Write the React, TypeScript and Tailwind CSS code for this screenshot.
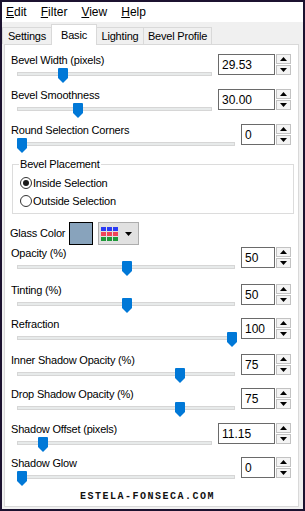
import type { ReactNode } from 'react';

const font = { fontFamily: '"Liberation Sans", Arial, sans-serif' };

function Thumb() {
  return (
    <svg width="10" height="15" viewBox="0 0 10 15" className="block">
      <path d="M1 0 H9 Q10 0 10 1 V10 L5 15 L0 10 V1 Q0 0 1 0 Z" fill="#0078d7" />
    </svg>
  );
}

function Arrow({ up }: { up?: boolean }) {
  return (
    <svg width="7" height="4" viewBox="0 0 7 4" className="block">
      <path d={up ? 'M3.5 0 L7 4 H0 Z' : 'M0 0 H7 L3.5 4 Z'} fill="#000" />
    </svg>
  );
}

function Spin({ value, wide }: { value: string; wide?: boolean }) {
  return (
    <div className="flex h-[21px] gap-[1px]">
      <div
        className={`flex h-full items-center border border-[#6a6a6a] bg-white pl-[3px] text-[12px] text-black ${wide ? 'w-[57px]' : 'w-[34px]'}`}
      >
        {value}
      </div>
      <div className="flex h-full w-[15px] flex-col gap-[1px]">
        <div className="flex flex-1 items-center justify-center border border-[#c2c2c2] bg-[#f4f4f4]">
          <Arrow up />
        </div>
        <div className="flex flex-1 items-center justify-center border border-[#c2c2c2] bg-[#f4f4f4]">
          <Arrow />
        </div>
      </div>
    </div>
  );
}

type RowProps = {
  label: string;
  value: string;
  offset: number;
  wide?: boolean;
  height: string;
};

function SliderRow({ label, value, offset, wide, height }: RowProps) {
  return (
    <div className={`flex ${height}`}>
      <div className="pl-[6px]">
        <div className="text-[11px] leading-[16px] tracking-[-0.2px] text-black">{label}</div>
        <div
          className={`relative ml-[6px] mt-[4px] h-[4px] border border-[#d6d6d6] bg-[#e7eaea] ${wide ? 'w-[195px]' : 'w-[218px]'}`}
        >
          <div className="absolute top-[-5px]" style={{ left: offset - 1 }}>
            <Thumb />
          </div>
        </div>
      </div>
      <div className="ml-auto mr-[7px] mt-[2px]">
        <Spin value={value} wide={wide} />
      </div>
    </div>
  );
}

function Radio({ checked, children }: { checked?: boolean; children: ReactNode }) {
  return (
    <div className="flex h-[18px] items-center gap-[1px] pl-[7px] text-[11px] tracking-[-0.2px]">
      <span className="flex h-[12px] w-[12px] items-center justify-center rounded-full border border-[#333] bg-white">
        {checked && <span className="h-[6px] w-[6px] rounded-full bg-[#1a1a1a]" />}
      </span>
      <span>{children}</span>
    </div>
  );
}

function Tab({ label, active, width }: { label: string; active?: boolean; width: string }) {
  return active ? (
    <div
      className={`relative top-[1px] z-10 -ml-px flex h-[21px] items-start justify-center border border-b-0 border-[#d9d9d9] bg-white pt-[2px] ${width}`}
    >
      {label}
    </div>
  ) : (
    <div
      className={`-ml-px flex h-[17px] items-center justify-center border border-b-0 border-[#d9d9d9] bg-[#f0f0f0] first:ml-0 ${width}`}
    >
      {label}
    </div>
  );
}

export default function App() {
  return (
    <div
      className="flex h-[511px] w-[305px] flex-col border-2 border-[#1c1230] bg-[#f0f0f0] text-black"
      style={font}
    >
      <div className="flex h-[20px] items-center gap-[14px] bg-white pl-[4px] text-[12px]">
        <span><u>E</u>dit</span>
        <span><u>F</u>ilter</span>
        <span><u>V</u>iew</span>
        <span><u>H</u>elp</span>
      </div>
      <div className="flex h-[22px] items-end text-[11px] tracking-[-0.2px]">
        <Tab label="Settings" width="w-[50px]" />
        <Tab label="Basic" active width="w-[46px]" />
        <Tab label="Lighting" width="w-[48px]" />
        <Tab label="Bevel Profile" width="w-[69px]" />
      </div>
      <div className="mb-[2px] ml-[2px] mr-[4px] flex flex-1 flex-col border border-[#d9d9d9] bg-white pt-[7px]">
        <SliderRow label="Bevel Width (pixels)" value="29.53" offset={41} wide height="h-[35px]" />
        <SliderRow label="Bevel Smoothness" value="30.00" offset={56} wide height="h-[35px]" />
        <SliderRow label="Round Selection Corners" value="0" offset={0} height="h-[35px]" />

        <div className="relative ml-[7px] mr-[4px] mt-[7px] h-[50px] border border-[#dcdcdc] pt-[9px]">
          <div className="absolute left-[6px] top-[-9px] bg-white px-[1px] text-[11px] leading-[16px] tracking-[-0.2px]">
            Bevel Placement
          </div>
          <Radio checked>Inside Selection</Radio>
          <Radio>Outside Selection</Radio>
        </div>

        <div className="mt-[8px] flex h-[23px] items-center pl-[5px] text-[11px] tracking-[-0.2px]">
          <span className="w-[59px]">Glass Color</span>
          <div className="h-[23px] w-[24px] border border-black bg-[#88a3bc]" />
          <div className="ml-[5px] flex h-[23px] w-[41px] items-center gap-[7px] border border-[#adadad] bg-[#e1e1e1] pl-[2px]">
            <div className="grid grid-cols-3 gap-[1px]">
              {['#2b3bf5', '#2b3bf5', '#2b3bf5', '#f0445a', '#f0445a', '#f0445a', '#1f9a3a', '#1f9a3a', '#1f9a3a'].map(
                (c, i) => (
                  <span key={i} className="h-[4px] w-[5px]" style={{ background: c }} />
                ),
              )}
            </div>
            <svg width="7" height="4" viewBox="0 0 7 4">
              <path d="M0 0 H7 L3.5 4 Z" fill="#000" />
            </svg>
          </div>
        </div>

        <SliderRow label="Opacity (%)" value="50" offset={105} height="h-[37px]" />
        <SliderRow label="Tinting (%)" value="50" offset={105} height="h-[34px]" />
        <SliderRow label="Refraction" value="100" offset={210} height="h-[36px]" />
        <SliderRow label="Inner Shadow Opacity (%)" value="75" offset={158} height="h-[34px]" />
        <SliderRow label="Drop Shadow Opacity (%)" value="75" offset={158} height="h-[35px]" />
        <SliderRow label="Shadow Offset (pixels)" value="11.15" offset={21} wide height="h-[34px]" />
        <SliderRow label="Shadow Glow" value="0" offset={0} height="h-[35px]" />

        <div
          className="pr-[8px] text-center text-[10px] font-bold leading-[14px] tracking-[1.5px] text-[#111]"
          style={{ fontFamily: '"Liberation Mono", monospace' }}
        >
          ESTELA-FONSECA.COM
        </div>
      </div>
    </div>
  );
}
